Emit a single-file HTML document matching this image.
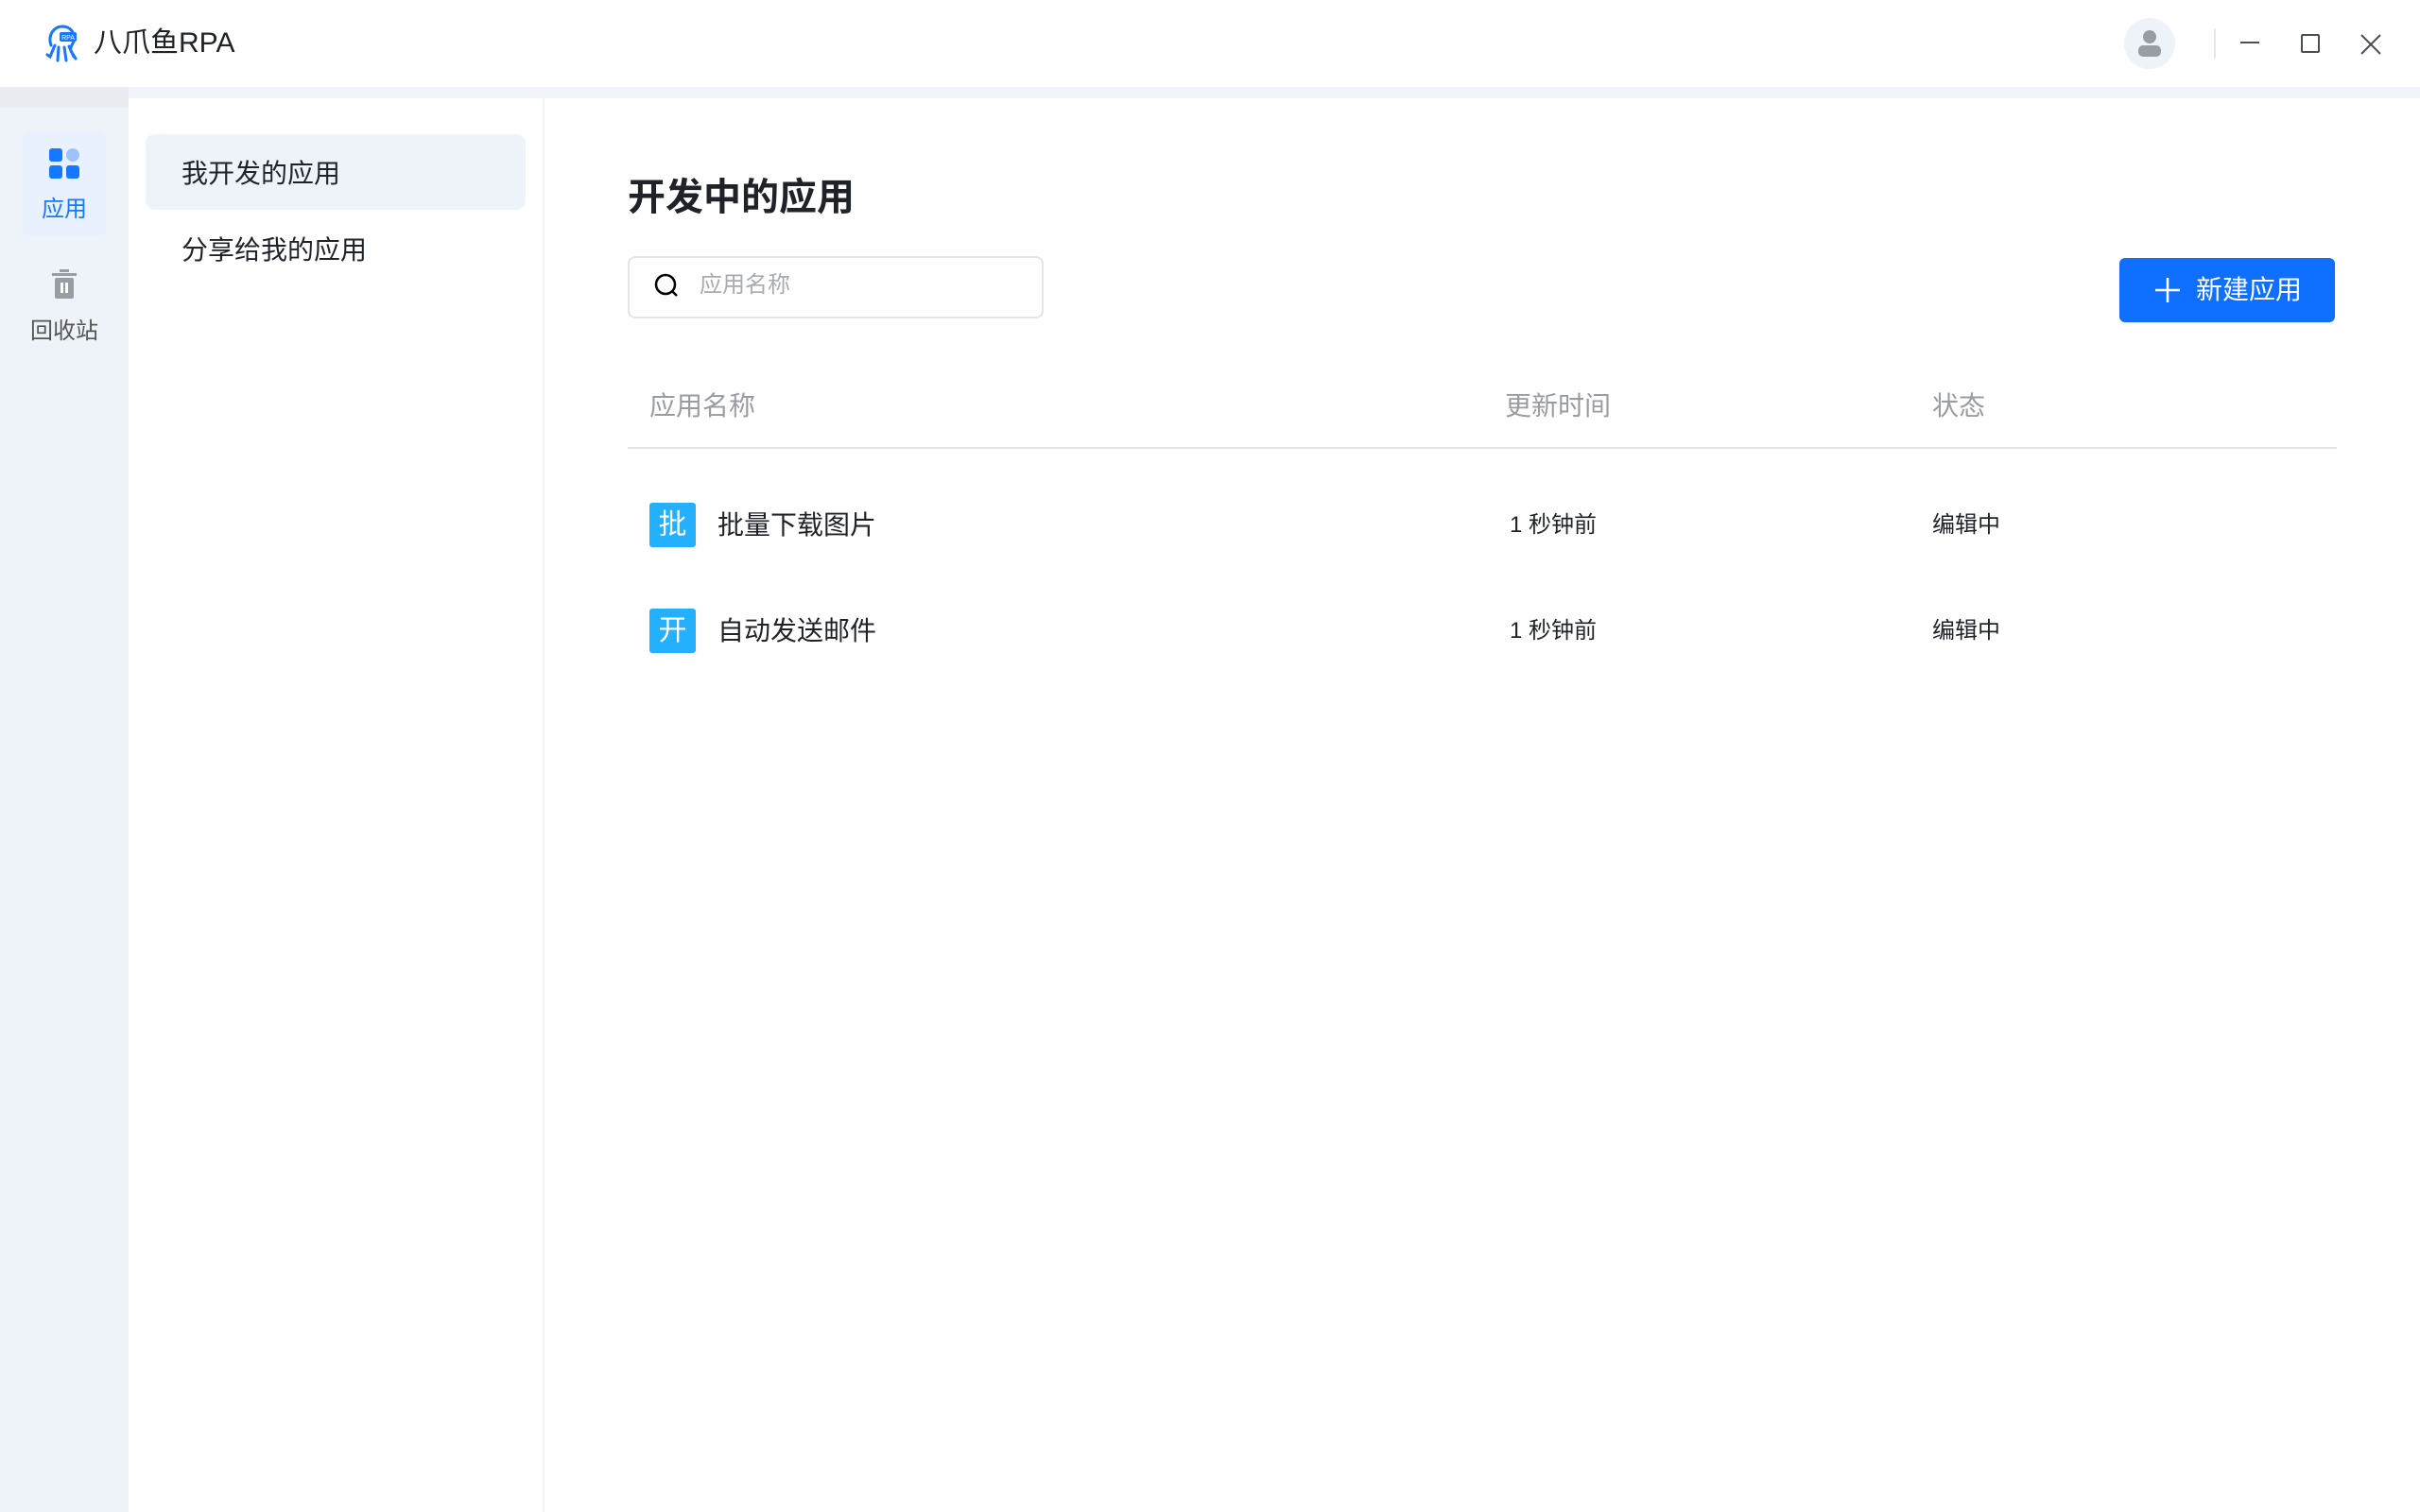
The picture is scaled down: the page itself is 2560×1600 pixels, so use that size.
<!DOCTYPE html>
<html><head><meta charset="utf-8"><style>
*{margin:0;padding:0;box-sizing:border-box}
body{width:2560px;height:1600px;overflow:hidden;background:#fff;font-family:"Liberation Sans","Noto Sans CJK SC",sans-serif;position:relative;color:#1f2329}
.abs{position:absolute}
.hdr{left:0;top:0;width:2560px;height:92px;background:#fff}
.strip{left:136px;top:92px;width:2424px;height:12px;background:#f1f5fb}
.rail{left:0;top:92px;width:136px;height:1508px;background:#eef3fa}
.railtop{left:0;top:92px;width:136px;height:22px;background:#e9edf2}
.panel{left:136px;top:104px;width:440px;height:1496px;background:#fff;border-right:2px solid #eef1f5}
.t{white-space:nowrap;line-height:1}
</style></head><body>
<div class="abs hdr"></div>
<svg class="abs" style="left:47px;top:26px" width="38" height="40" viewBox="0 0 36 40">
<path d="M6 22 C2 10 10 2 18 2 C26 2 32 8 30 18 C28 22 26 24 27 28 L32 36 M10 22 L5 34 L2 32 M14 24 L13 38 M20 24 L22 38 M25 23 L30 34" fill="none" stroke="#1677ff" stroke-width="3" stroke-linecap="round"/>
<rect x="15" y="8" width="18" height="10" rx="2" fill="#1677ff"/>
<text x="24" y="16" font-size="7" fill="#fff" text-anchor="middle" font-family="Liberation Sans">RPA</text>
</svg>
<div class="abs t" style="left:99px;top:31px;font-size:30px;color:#1f2329">八爪鱼RPA</div>
<div class="abs" style="left:2247px;top:19px;width:54px;height:54px;border-radius:50%;background:#eef3fa"></div>
<div class="abs" style="left:2267px;top:32px;width:14px;height:14px;border-radius:50%;background:#9a9ca3"></div>
<div class="abs" style="left:2262px;top:48px;width:24px;height:12px;border-radius:5px;background:#9a9ca3"></div>
<div class="abs" style="left:2342px;top:30px;width:2px;height:32px;background:#e4e7ec"></div>
<div class="abs" style="left:2370px;top:44px;width:20px;height:2px;background:#4a4f57"></div>
<div class="abs" style="left:2434px;top:36px;width:20px;height:20px;border:2px solid #4a4f57;border-radius:2px"></div>
<svg class="abs" style="left:2497px;top:36px" width="22" height="22"><path d="M1 1L21 21M21 1L1 21" stroke="#4a4f57" stroke-width="2"/></svg>
<div class="abs strip"></div>
<div class="abs rail"></div>
<div class="abs railtop"></div>
<div class="abs" style="left:24px;top:140px;width:88px;height:110px;border-radius:8px;background:#e8f1fd"></div>
<div class="abs" style="left:52px;top:157px;width:14px;height:14px;border-radius:3px;background:#1677ff"></div>
<div class="abs" style="left:70px;top:157px;width:14px;height:14px;border-radius:50%;background:#9cc3fb"></div>
<div class="abs" style="left:52px;top:175px;width:14px;height:14px;border-radius:3px;background:#1677ff"></div>
<div class="abs" style="left:70px;top:175px;width:14px;height:14px;border-radius:3px;background:#1677ff"></div>
<div class="abs t" style="left:44px;top:210px;font-size:24px;color:#1677ff">应用</div>
<svg class="abs" style="left:54px;top:285px" width="28" height="32"><rect x="1" y="4" width="26" height="3" fill="#9a9ca3"/><rect x="9" y="0" width="10" height="3" fill="#9a9ca3"/><rect x="4" y="9" width="20" height="22" rx="2" fill="#9a9ca3"/><rect x="10" y="14" width="3" height="11" fill="#fff"/><rect x="15" y="14" width="3" height="11" fill="#fff"/></svg>
<div class="abs t" style="left:32px;top:339px;font-size:24px;color:#555">回收站</div>
<div class="abs panel"></div>
<div class="abs" style="left:154px;top:142px;width:402px;height:80px;border-radius:10px;background:#eef3fa"></div>
<div class="abs t" style="left:192px;top:170px;font-size:28px;color:#1f2329">我开发的应用</div>
<div class="abs t" style="left:192px;top:251px;font-size:28px;color:#1f2329">分享给我的应用</div>
<div class="abs t" style="left:664px;top:189px;font-size:40px;font-weight:bold;color:#1f2329">开发中的应用</div>
<div class="abs" style="left:664px;top:271px;width:440px;height:66px;border:2px solid #e3e5e8;border-radius:8px"></div>
<svg class="abs" style="left:692px;top:289px" width="28" height="28"><circle cx="12" cy="12" r="10" fill="none" stroke="#000" stroke-width="2.5"/><path d="M19 19L24 24" stroke="#000" stroke-width="2.5"/></svg>
<div class="abs t" style="left:740px;top:290px;font-size:24px;color:#a8abb2">应用名称</div>
<div class="abs" style="left:2242px;top:273px;width:228px;height:68px;border-radius:6px;background:#0f6fff"></div>
<svg class="abs" style="left:2280px;top:294px" width="26" height="26"><path d="M13 0V26M0 13H26" stroke="#fff" stroke-width="2.5"/></svg>
<div class="abs t" style="left:2323px;top:293px;font-size:28px;color:#fff">新建应用</div>
<div class="abs t" style="left:687px;top:416px;font-size:28px;color:#999ca3">应用名称</div>
<div class="abs t" style="left:1592px;top:416px;font-size:28px;color:#999ca3">更新时间</div>
<div class="abs t" style="left:2044px;top:416px;font-size:28px;color:#999ca3">状态</div>
<div class="abs" style="left:664px;top:473px;width:1808px;height:2px;background:#e3e5e8"></div>
<div class="abs t" style="left:687px;top:532px;width:49px;height:47px;border-radius:3px;background:#22b0ff;color:#fff;font-size:30px;text-align:center;line-height:47px">批</div>
<div class="abs t" style="left:759px;top:542px;font-size:28px;color:#1f2329">批量下载图片</div>
<div class="abs t" style="left:1597px;top:544px;font-size:24px;color:#1f2329">1 秒钟前</div>
<div class="abs t" style="left:2044px;top:544px;font-size:24px;color:#1f2329">编辑中</div>
<div class="abs t" style="left:687px;top:644px;width:49px;height:47px;border-radius:3px;background:#22b0ff;color:#fff;font-size:30px;text-align:center;line-height:47px">开</div>
<div class="abs t" style="left:759px;top:654px;font-size:28px;color:#1f2329">自动发送邮件</div>
<div class="abs t" style="left:1597px;top:656px;font-size:24px;color:#1f2329">1 秒钟前</div>
<div class="abs t" style="left:2044px;top:656px;font-size:24px;color:#1f2329">编辑中</div>
</body></html>
